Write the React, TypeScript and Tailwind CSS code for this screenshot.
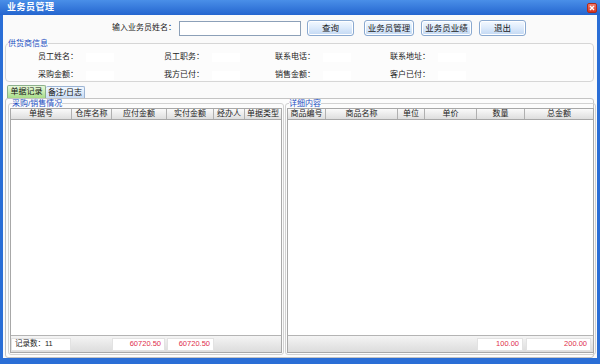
import React from "react";

const font = { fontFamily: '"Liberation Sans", "Noto Sans CJK SC", sans-serif' };

function Btn({ children }: { children: React.ReactNode }) {
  return (
    <button className="w-full h-[16px] rounded-[3px] border border-[#8aa9d0] bg-gradient-to-b from-[#f4f9ff] via-[#dceafb] to-[#c2d8f3] text-[8.5px] text-[#1a1a1a] flex items-center justify-center shadow-[inset_0_0_0_1px_#ffffff]">
      {children}
    </button>
  );
}

function Field({ label, w }: { label: string; w: string }) {
  return (
    <div className={`flex items-center ${w}`}>
      <span>{label}</span>
      <span className="ml-[8px] h-[9px] w-[28px] bg-white" />
    </div>
  );
}

function Header({ cols }: { cols: [string, number][] }) {
  return (
    <div className="flex h-[11px] border-b border-[#a8a8a8] bg-gradient-to-b from-[#fafafa] to-[#dedede]">
      {cols.map(([t, w], i) => (
        <div
          key={i}
          style={{ width: w }}
          className="flex items-center justify-center border-r border-[#b0b0b0] text-[8px] text-[#222] last:border-r-0"
        >
          {t}
        </div>
      ))}
    </div>
  );
}

function Cell({ w, children, red, left }: { w: number; children?: React.ReactNode; red?: boolean; left?: boolean }) {
  return (
    <div
      style={{ width: w }}
      className={`h-[13px] bg-white border border-[#e2e2e2] flex items-center text-[7.5px] px-[3px] ${
        left ? "justify-start" : "justify-end"
      } ${red ? "text-[#e0304a]" : "text-[#222]"}`}
    >
      {children}
    </div>
  );
}

export default function App() {
  const leftCols: [string, number][] = [
    ["单据号", 61],
    ["仓库名称", 40],
    ["应付金额", 55],
    ["实付金额", 47],
    ["经办人", 31],
    ["单据类型", 36],
  ];
  const rightCols: [string, number][] = [
    ["商品编号", 38],
    ["商品名称", 72],
    ["单位", 27],
    ["单价", 52],
    ["数量", 48],
    ["总金额", 68],
  ];
  return (
    <div style={font} className="w-[600px] h-[364px] bg-[#2a6ed6] flex flex-col text-[8px] text-[#222] overflow-hidden">
      {/* title bar */}
      <div className="h-[15px] flex items-center justify-between pl-[7px] pr-[3px] bg-gradient-to-b from-[#4a8fe8] to-[#2465cf]">
        <span className="text-white font-bold text-[9px] tracking-[0.5px]">业务员管理</span>
        <div className="w-[10px] h-[10px] rounded-[2px] bg-gradient-to-b from-[#f07a6a] to-[#d8321e] border border-[#b02a1a] flex items-center justify-center">
          <svg width="6" height="6" viewBox="0 0 6 6">
            <path d="M1 1 L5 5 M5 1 L1 5" stroke="white" strokeWidth="1.4" />
          </svg>
        </div>
      </div>
      {/* content */}
      <div className="flex-1 mx-[3px] mb-[6px] bg-[#fafafa] flex flex-col pl-[2px] pr-[3px]">
        {/* search row */}
        <div className="flex items-center h-[16px] mt-[5px]">
          <span className="ml-[107px] text-[8px]">输入业务员姓名：</span>
          <input className="ml-[3px] w-[122px] h-[15px] border border-[#8ca0b8] bg-white" />
          <div className="ml-[6px] w-[47px]"><Btn>查询</Btn></div>
          <div className="ml-[10px] w-[50px]"><Btn>业务员管理</Btn></div>
          <div className="ml-[7px] w-[51px]"><Btn>业务员业绩</Btn></div>
          <div className="ml-[7px] w-[47px]"><Btn>退出</Btn></div>
        </div>
        {/* group */}
        <fieldset className="mt-[3px] h-[43px] border border-[#d6d6d6] rounded-[4px] bg-[#fcfcfc] flex flex-col">
          <legend className="ml-[2px] text-[8px] text-[#1d4fc2] leading-[9px]">供货商信息</legend>
          <div className="flex flex-col gap-[6px] mt-[3px] pl-[32px]">
            <div className="flex">
              <Field label="员工姓名：" w="w-[126px]" />
              <Field label="员工职务：" w="w-[111px]" />
              <Field label="联系电话：" w="w-[115px]" />
              <Field label="联系地址：" w="w-[100px]" />
            </div>
            <div className="flex">
              <Field label="采购金额：" w="w-[126px]" />
              <Field label="我方已付：" w="w-[111px]" />
              <Field label="销售金额：" w="w-[115px]" />
              <Field label="客户已付：" w="w-[100px]" />
            </div>
          </div>
        </fieldset>
        {/* tabs */}
        <div className="flex mt-[3px] ml-[2px] h-[13px] items-end">
          <div className="h-[13px] w-[39px] border border-[#8cb08c] border-b-0 rounded-t-[2px] bg-gradient-to-b from-[#e6f7d8] to-[#a8dc88] flex items-center justify-center text-[8px] text-[#111]">
            单据记录
          </div>
          <div className="h-[12px] w-[39px] border border-[#9cb4d4] border-b-0 border-l-0 rounded-t-[2px] bg-gradient-to-b from-[#f2f8ff] to-[#c8dcf4] flex items-center justify-center text-[8px] text-[#111]">
            备注/日志
          </div>
        </div>
        {/* tab panel */}
        <div className="flex-1 border border-[#c4c4c4] rounded-[3px] bg-[#fcfcfc] flex gap-[1px] px-[2px] pb-[2px]">
          {/* left */}
          <fieldset className="w-[276px] border border-[#d2d2d2] rounded-[3px] px-[1px] pb-[1px] flex flex-col">
            <legend className="ml-[2px] text-[8px] text-[#1d4fc2] leading-[9px]">采购/销售情况</legend>
            <div className="flex-1 flex flex-col border border-[#a8a8a8] bg-white">
              <Header cols={leftCols} />
              <div className="flex-1 bg-white" />
              <div className="h-[17px] border-t border-[#b4b4b4] bg-gradient-to-b from-[#f4f4f4] to-[#dcdcdc] flex items-center">
                <Cell w={60} left>记录数：11</Cell>
                <div className="w-[41px]" />
                <Cell w={53} red>60720.50</Cell>
                <div className="w-[2px]" />
                <Cell w={47} red>60720.50</Cell>
              </div>
            </div>
          </fieldset>
          {/* right */}
          <fieldset className="flex-1 border border-[#d2d2d2] rounded-[3px] px-[1px] pb-[1px] flex flex-col">
            <legend className="ml-[2px] text-[8px] text-[#1d4fc2] leading-[9px]">详细内容</legend>
            <div className="flex-1 flex flex-col border border-[#a8a8a8] bg-white">
              <Header cols={rightCols} />
              <div className="flex-1 bg-white" />
              <div className="h-[17px] border-t border-[#b4b4b4] bg-gradient-to-b from-[#f4f4f4] to-[#dcdcdc] flex items-center">
                <div className="flex-1" />
                <Cell w={46} red>100.00</Cell>
                <div className="w-[3px]" />
                <Cell w={65} red>200.00</Cell>
                <div className="w-[2px]" />
              </div>
            </div>
          </fieldset>
        </div>
      </div>
    </div>
  );
}
